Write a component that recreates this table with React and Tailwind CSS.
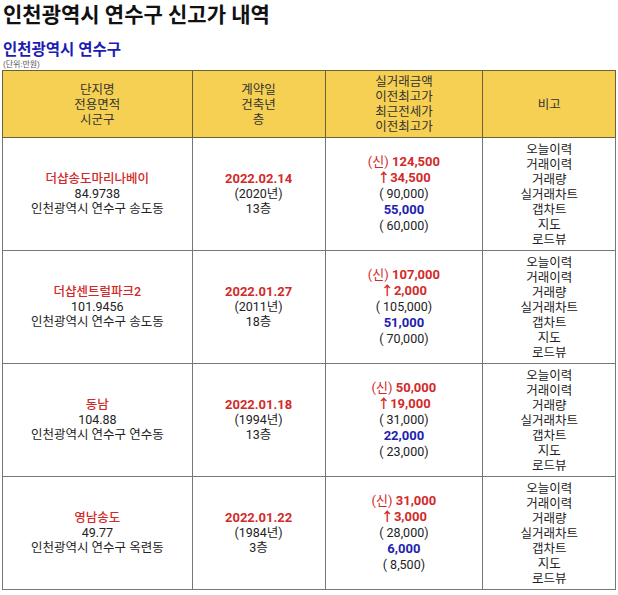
import React from 'react';

const rows = [
  { name: '더샵송도마리나베이', area: '84.9738', addr: '인천광역시 연수구 송도동', date: '2022.02.14', year: '(2020년)', floor: '13층', price: '124,500', up: '34,500', prev: '( 90,000)', jeonse: '55,000', jprev: '( 60,000)' },
  { name: '더샵센트럴파크2', area: '101.9456', addr: '인천광역시 연수구 송도동', date: '2022.01.27', year: '(2011년)', floor: '18층', price: '107,000', up: '2,000', prev: '( 105,000)', jeonse: '51,000', jprev: '( 70,000)' },
  { name: '동남', area: '104.88', addr: '인천광역시 연수구 연수동', date: '2022.01.18', year: '(1994년)', floor: '13층', price: '50,000', up: '19,000', prev: '( 31,000)', jeonse: '22,000', jprev: '( 23,000)' },
  { name: '영남송도', area: '49.77', addr: '인천광역시 연수구 옥련동', date: '2022.01.22', year: '(1984년)', floor: '3층', price: '31,000', up: '3,000', prev: '( 28,000)', jeonse: '6,000', jprev: '( 8,500)' },
];

const links = ['오늘이력', '거래이력', '거래량', '실거래차트', '갭차트', '지도', '로드뷰'];

export default function App() {
  return (
    <div className="bg-white text-[#222] min-h-screen" style={{ fontFamily: "Roboto, 'Noto Sans CJK KR', sans-serif" }}>
      <div className="pl-[3px] pt-[2px]">
        <h1 className="text-[21px] leading-[26px] font-semibold text-[#111]">인천광역시 연수구 신고가 내역</h1>
        <h2 className="mt-[12px] text-[15.5px] leading-[20px] font-bold text-[#1c1cb4]">인천광역시 연수구</h2>
        <p className="text-[8px] leading-[10px] text-[#555]">(단위:만원)</p>
      </div>
      <table className="ml-[2px] border-collapse text-[12.5px] leading-[15px] text-center" style={{ width: 614 }}>
        <colgroup>
          <col style={{ width: 190 }} />
          <col style={{ width: 133 }} />
          <col style={{ width: 158 }} />
          <col style={{ width: 133 }} />
        </colgroup>
        <thead>
          <tr className="bg-[#f6d052] h-[67px] text-[#333]">
            <th className="border border-[#6b6040] font-normal">단지명<br />전용면적<br />시군구</th>
            <th className="border border-[#6b6040] font-normal">계약일<br />건축년<br />층</th>
            <th className="border border-[#6b6040] font-normal">실거래금액<br />이전최고가<br />최근전세가<br />이전최고가</th>
            <th className="border border-[#6b6040] font-normal">비고</th>
          </tr>
        </thead>
        <tbody>
          {rows.map(r => (
            <tr key={r.name} className="h-[113px]">
              <td className="border border-[#777] pb-[2px]">
                <div className="text-[#d22a2a] font-medium">{r.name}</div>
                <div>{r.area}</div>
                <div>{r.addr}</div>
              </td>
              <td className="border border-[#777] pb-[2px]">
                <div className="text-[#d22a2a] font-bold text-[13px]">{r.date}</div>
                <div>{r.year}</div>
                <div>{r.floor}</div>
              </td>
              <td className="border border-[#777] leading-[16px]">
                <div className="text-[#d22a2a] font-bold text-[13px]"><span className="font-normal">(신)</span> {r.price}</div>
                <div className="text-[#d22a2a] font-bold text-[13px]">↑{r.up}</div>
                <div>{r.prev}</div>
                <div className="text-[#2222b0] font-bold text-[13px]">{r.jeonse}</div>
                <div>{r.jprev}</div>
              </td>
              <td className="border border-[#777]">
                {links.map(l => <div key={l}>{l}</div>)}
              </td>
            </tr>
          ))}
        </tbody>
      </table>
    </div>
  );
}
